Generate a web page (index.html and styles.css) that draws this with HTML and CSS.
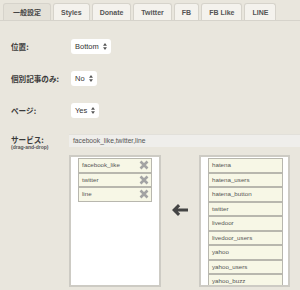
FILE: index.html
```html
<!DOCTYPE html>
<html lang="ja">
<head>
    <meta charset="UTF-8">
    <title>一般設定</title>
    <link rel="stylesheet" href="styles.css">
</head>
<body>
    <div class="tabs">
        <span class="tab active">一般設定</span>
        <span class="tab">Styles</span>
        <span class="tab">Donate</span>
        <span class="tab">Twitter</span>
        <span class="tab">FB</span>
        <span class="tab">FB Like</span>
        <span class="tab">LINE</span>
    </div>
    <div class="form">
        <div class="label">位置:</div>
        <div class="field"><span class="select">Bottom <svg class="updown" viewBox="0 0 5 9"><path d="M2.5 0L5 3.5H0zM2.5 9L0 5.5h5z"/></svg></span></div>

        <div class="label">個別記事のみ:</div>
        <div class="field"><span class="select">No <svg class="updown" viewBox="0 0 5 9"><path d="M2.5 0L5 3.5H0zM2.5 9L0 5.5h5z"/></svg></span></div>

        <div class="label">ページ:</div>
        <div class="field"><span class="select">Yes <svg class="updown" viewBox="0 0 5 9"><path d="M2.5 0L5 3.5H0zM2.5 9L0 5.5h5z"/></svg></span></div>

        <div class="label service-label">サービス:<small>(drag-and-drop)</small></div>
        <div class="field">
            <div class="services">facebook_like,twitter,line</div>
        </div>

        <div></div>
        <div class="dnd">
            <ul class="box" id="chosen"></ul>
            <div class="arrow">
                <svg width="16" height="12" viewBox="0 0 16 12"><path d="M0 6L6 0l2.2 2.2-2.4 2.4H16v2.8H5.8l2.4 2.4L6 12z" fill="#444"/></svg>
            </div>
            <ul class="box" id="pool"></ul>
        </div>
    </div>
    <script>
        var chosen = ["facebook_like", "twitter", "line"];
        var pool = ["hatena", "hatena_users", "hatena_button", "twitter", "livedoor", "livedoor_users", "yahoo", "yahoo_users", "yahoo_buzz"];
        var cross = '<svg class="del" viewBox="0 0 10 10"><path d="M1.5 1.5l7 7M8.5 1.5l-7 7" stroke="#a3a3a3" stroke-width="2.6"/></svg>';
        chosen.forEach(function (name) {
            var li = document.createElement("li");
            li.innerHTML = "<span>" + name + "</span>" + cross;
            document.getElementById("chosen").appendChild(li);
        });
        pool.forEach(function (name) {
            var li = document.createElement("li");
            li.textContent = name;
            document.getElementById("pool").appendChild(li);
        });
    </script>
</body>
</html>
```

FILE: styles.css
```css
body {
    margin: 0;
    height: 290px;
    overflow: hidden;
    background: #e9e6dd;
    font-family: "Liberation Sans", "Noto Sans CJK JP", sans-serif;
    color: #333;
}
.tabs {
    display: flex;
    gap: 2px;
    padding: 3px 0 0 3px;
    border-bottom: 1px solid #d6d3cb;
}
.tab {
    height: 16px;
    line-height: 17px;
    padding: 0 7px;
    border: 1px solid #d6d3cb;
    border-bottom: none;
    border-radius: 3px 3px 0 0;
    background: #f4f2ed;
    font-size: 7px;
    font-weight: bold;
    color: #555;
}
.tab.active {
    background: #e4e1d8;
    padding: 0 9px;
    color: #444;
}
.form {
    display: grid;
    grid-template-columns: 58px 1fr;
    row-gap: 17px;
    padding: 18px 0 0 11px;
}
.label {
    height: 15px;
    font-size: 7.6px;
    font-weight: bold;
    line-height: 15px;
    font-family: "Noto Sans CJK JP", sans-serif;
    color: #3a3a3a;
}
.service-label {
    height: auto;
    margin-top: -1px;
    line-height: 11px;
}
.label small {
    display: block;
    margin-top: -1px;
    font-size: 5px;
    line-height: 7px;
    font-family: "Liberation Sans", sans-serif;
    color: #555;
}
.field {
    display: flex;
    align-items: flex-start;
    min-width: 0;
}
.select {
    display: inline-flex;
    align-items: center;
    gap: 4px;
    height: 15px;
    margin-left: 2px;
    padding: 0 4px;
    background: #fff;
    border-radius: 3px;
    font-size: 7.5px;
    color: #333;
}
.updown {
    width: 4px;
    height: 7px;
    fill: #555;
}
.services {
    flex: 1;
    margin-top: -1px;
    height: 12px;
    line-height: 12px;
    padding-left: 4px;
    background: #efeeeb;
    border-top: 1px solid #e2e0da;
    font-size: 6.7px;
    color: #555;
    white-space: nowrap;
}
.dnd {
    display: flex;
    margin-top: -13px;
}
.box {
    list-style: none;
    margin: 0;
    padding: 1px 0 0 7px;
    width: 91px;
    height: 132px;
    overflow: hidden;
    box-sizing: border-box;
    background: #fff;
    border: 2px solid #cdcbc4;
}
#chosen {
    width: 92px;
}
.box li {
    display: flex;
    align-items: center;
    justify-content: space-between;
    height: 14.5px;
    width: 74px;
    box-sizing: border-box;
    padding: 0 2px 1px 3px;
    background: #f7f7e6;
    border: 1px solid #b8b7ae;
    font-size: 6.2px;
    color: #555;
}
#pool li {
    width: 75px;
}
.del {
    width: 10px;
    height: 10px;
    margin-top: 1px;
}
.arrow {
    width: 38px;
    display: flex;
    align-items: center;
    justify-content: center;
    padding-bottom: 22px;
}
```
